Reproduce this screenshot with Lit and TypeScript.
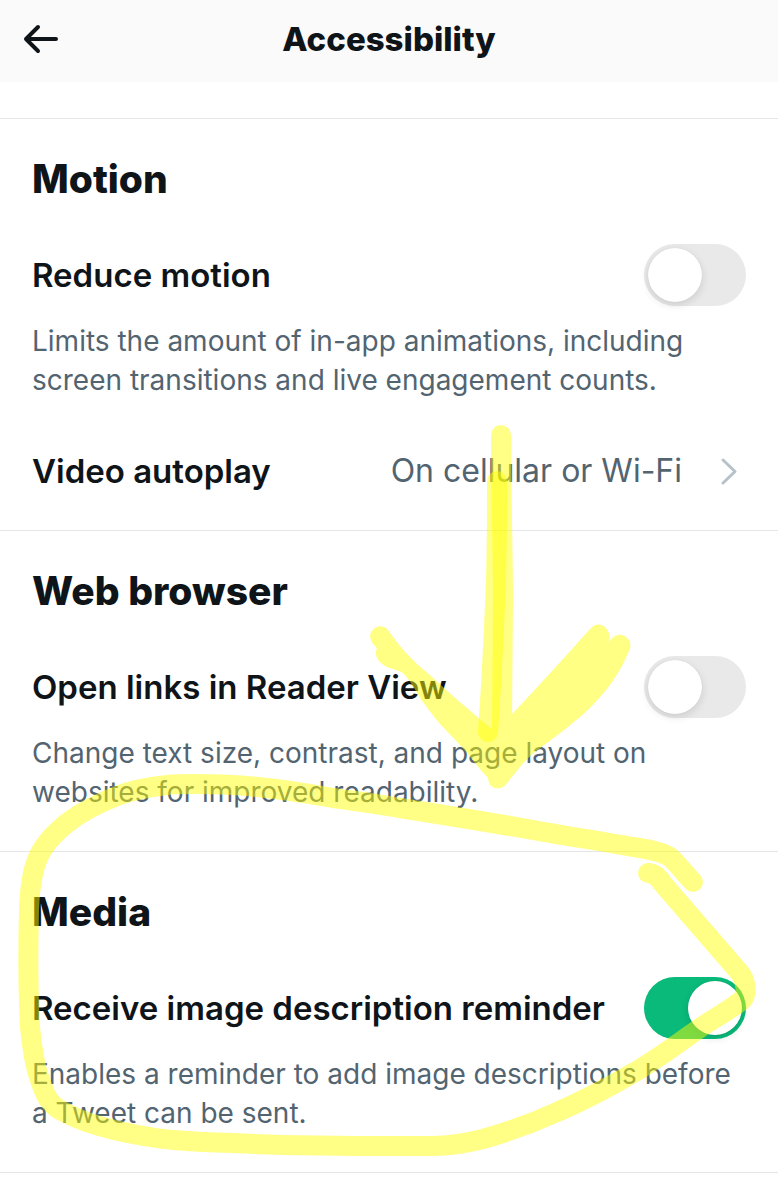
import { LitElement, html, css, nothing } from "lit";
import { customElement, property, state } from "lit/decorators.js";

@customElement("toggle-setting")
class ToggleSetting extends LitElement {
  @property() label = "";
  @property() description = "";
  @property({ type: Boolean }) checked = false;

  static styles = css`
    :host {
      display: block;
    }
    .row {
      display: flex;
      align-items: center;
      justify-content: space-between;
      gap: 24px;
      min-height: 62px;
    }
    .label {
      font-size: 33px;
      line-height: 40px;
      font-weight: 600;
      color: #0f1419;
    }
    .switch {
      appearance: none;
      box-sizing: border-box;
      flex: none;
      display: flex;
      align-items: center;
      width: 102px;
      height: 62px;
      margin: 0;
      padding: 4px;
      border-radius: 31px;
      background: #e9e9ea;
      cursor: pointer;
    }
    .switch::before {
      content: "";
      width: 54px;
      height: 54px;
      border-radius: 50%;
      background: #fff;
      box-shadow: 0 3px 8px rgba(0, 0, 0, 0.12), 0 0 1px rgba(0, 0, 0, 0.12);
    }
    .switch:checked {
      justify-content: flex-end;
      background: #0aba7b;
    }
    .description {
      margin: 16px 0 0;
      font-size: 28px;
      line-height: 39px;
      color: #536471;
    }
  `;

  private onChange(event: Event) {
    this.checked = (event.target as HTMLInputElement).checked;
  }

  render() {
    return html`
      <div class="row">
        <label class="label" for="switch">${this.label}</label>
        <input
          class="switch"
          id="switch"
          type="checkbox"
          role="switch"
          aria-describedby="description"
          .checked=${this.checked}
          @change=${this.onChange}
        />
      </div>
      <p class="description" id="description">${this.description}</p>
    `;
  }
}

interface Toggle {
  label: string;
  description: string;
  checked: boolean;
}

interface Section {
  title: string;
  toggle: Toggle;
  link?: { label: string; value: string };
}

@customElement("app-root")
class AppRoot extends LitElement {
  @state() private sections: Section[] = [
    {
      title: "Motion",
      toggle: {
        label: "Reduce motion",
        description:
          "Limits the amount of in-app animations, including screen transitions and live engagement counts.",
        checked: false,
      },
      link: { label: "Video autoplay", value: "On cellular or Wi-Fi" },
    },
    {
      title: "Web browser",
      toggle: {
        label: "Open links in Reader View",
        description:
          "Change text size, contrast, and page layout on websites for improved readability.",
        checked: false,
      },
    },
    {
      title: "Media",
      toggle: {
        label: "Receive image description reminder",
        description:
          "Enables a reminder to add image descriptions before a Tweet can be sent.",
        checked: true,
      },
    },
  ];

  static styles = css`
    :host {
      display: block;
      position: relative;
      min-height: 100vh;
      background: #fff;
      color: #0f1419;
      font-family: Inter, "Liberation Sans", sans-serif;
    }
    .header {
      box-sizing: border-box;
      display: grid;
      grid-template-columns: 60px 1fr 60px;
      align-items: center;
      min-height: 82px;
      padding-bottom: 4px;
      background: #fafafa;
    }
    .back {
      display: flex;
      justify-content: flex-end;
      padding: 0;
      border: 0;
      background: none;
      color: inherit;
      cursor: pointer;
    }
    .title {
      margin: 0;
      text-align: center;
      font-size: 33px;
      line-height: 40px;
      font-weight: 800;
    }
    .content {
      padding-top: 36px;
    }
    .section {
      padding: 36px 32px 39px;
      border-top: 1px solid #e4e6e7;
    }
    .section.has-link {
      padding-bottom: 28px;
    }
    .section:last-child {
      border-bottom: 1px solid #e4e6e7;
    }
    .heading {
      margin: 0 0 41px;
      font-size: 39px;
      line-height: 48px;
      font-weight: 800;
    }
    .link {
      display: flex;
      align-items: center;
      justify-content: space-between;
      min-height: 62px;
      margin-top: 40px;
      color: inherit;
      text-decoration: none;
      font-size: 33px;
      line-height: 40px;
    }
    .name {
      font-weight: 600;
    }
    .value {
      display: flex;
      align-items: center;
      gap: 32px;
      font-size: 32px;
      color: #536471;
    }
    .marks {
      position: absolute;
      top: 0;
      left: 0;
      width: 778px;
      height: 1200px;
      pointer-events: none;
    }
  `;

  render() {
    return html`
      <header class="header">
        <button class="back" aria-label="Back">
          <svg width="38" height="32" viewBox="0 0 38 32" fill="none" stroke="currentColor"
            stroke-width="4" stroke-linecap="round" stroke-linejoin="round">
            <path d="M16 4 4 16l12 12M4 16h30" />
          </svg>
        </button>
        <h1 class="title">Accessibility</h1>
      </header>
      <main class="content">
        ${this.sections.map(
          (section) => html`
            <section class="section ${section.link ? "has-link" : ""}">
              <h2 class="heading">${section.title}</h2>
              <toggle-setting
                .label=${section.toggle.label}
                .description=${section.toggle.description}
                .checked=${section.toggle.checked}
              ></toggle-setting>
              ${section.link
                ? html`
                    <a class="link" href="#autoplay">
                      <span class="name">${section.link.label}</span>
                      <span class="value">
                        ${section.link.value}
                        <svg width="32" height="30" viewBox="0 0 32 30" fill="none"
                          stroke="#b6c2c9" stroke-width="3" stroke-linecap="round"
                          stroke-linejoin="round">
                          <path d="M9 4l12 11.500L9 27" />
                        </svg>
                      </span>
                    </a>
                  `
                : nothing}
            </section>
          `
        )}
      </main>
      <svg class="marks" viewBox="0 0 778 1200" fill="none" stroke="#ff0" stroke-width="20"
        stroke-linecap="round" stroke-linejoin="round" aria-hidden="true">
        <g opacity="0.48">
          <path d="M501 435C501 480 503 560 503 600S502 690 502 735" />
          <path fill="#ff0" stroke="none" d="M388 630C396 641 402 649 410 657L418 665C434 678 450 694 467 708L482 721L493 730L513 713C527 698 540 684 553 670C566 656 579 641 591 628C601 618 614 632 608 643C613 636 617 634 622 635C630 637 633 646 628 653C622 668 612 684 600 697C594 704 588 710 580 717C568 727 559 734 547 743C536 751 528 757 520 767L507 783C503 790 489 792 488 778C480 770 470 756 460 745L440 724C430 712 426 706 420 698C414 688 410 680 403 673C398 670 392 669 387 667C377 662 374 655 377 648C371 643 368 636 372 631C376 625 384 625 388 630Z" />
        </g>
        <path opacity="0.48" d="M497 481C497 530 497 570 495 605C493 650 491 690 488 732" />
        <path opacity="0.48" d="M693 882C684 873 677 863 670 857C660 851 646 849 633 847C600 841 566 836 533 830C488 822 444 815 400 808C378 804 356 801 333 798C300 792 266 787 233 785C210 784 187 783 167 785C149 787 132 790 117 796C99 803 80 813 67 823C57 831 48 840 42 850C34 863 30 880 29 910C28 950 28 990 30 1027C32 1047 34 1063 39 1077C44 1092 48 1105 64 1112C84 1123 107 1129 133 1134C166 1141 200 1142 233 1143C290 1146 345 1146 400 1146H433C450 1146 467 1143 483 1139C508 1132 533 1123 557 1112C583 1101 609 1087 633 1073C656 1060 678 1043 700 1028C714 1018 729 1011 742 1000C747 996 747 982 740 973L663 884C659 878 655 873 648 873" />
      </svg>
    `;
  }
}
